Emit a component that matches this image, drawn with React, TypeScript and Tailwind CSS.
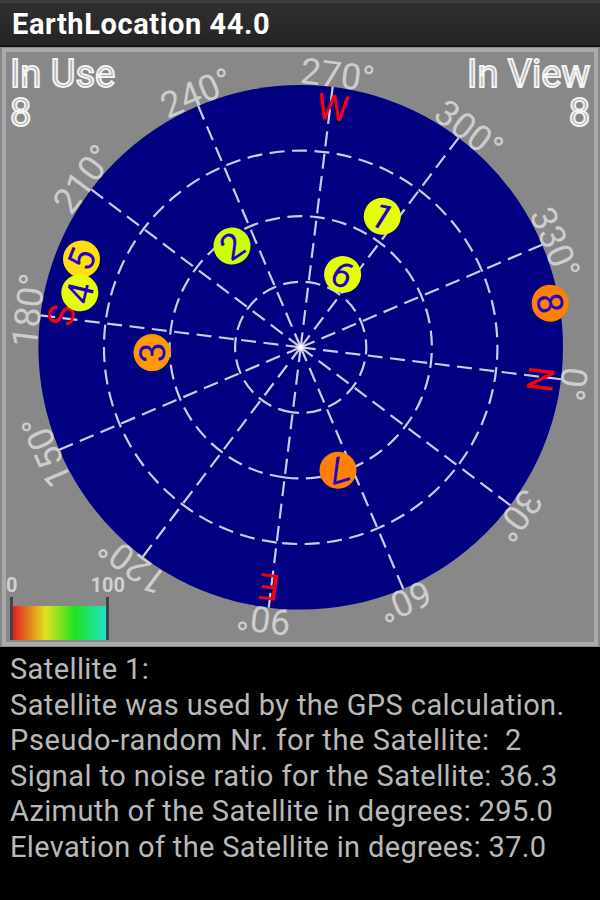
const CX = 300.7
const CY = 347.3
const R = 262.3
const HEADING = 7

const AZIMUTHS = [0, 30, 60, 90, 120, 150, 180, 210, 240, 270, 300, 330]

const COMPASS = [
  { label: 'N', azimuth: 0 },
  { label: 'E', azimuth: 90 },
  { label: 'S', azimuth: 180 },
  { label: 'W', azimuth: 270 },
]

const SATELLITES = [
  { id: 1, x: 382.3, y: 216.3, color: '#e6ff00' },
  { id: 2, x: 232, y: 246, color: '#ccff00' },
  { id: 3, x: 152, y: 352.6, color: '#ff9900' },
  { id: 5, x: 81.5, y: 259, color: '#ffe000' },
  { id: 4, x: 79.8, y: 292.8, color: '#e6ff00' },
  { id: 6, x: 342.6, y: 274.5, color: '#e6ff00' },
  { id: 7, x: 338, y: 470.2, color: '#ff8000' },
  { id: 8, x: 550.2, y: 303.2, color: '#ff8000' },
]

const DETAILS = [
  { text: 'Satellite 1:', tracking: 'tracking-[0.4px]' },
  { text: 'Satellite was used by the GPS calculation.', tracking: 'tracking-[0.42px]' },
  { text: 'Pseudo-random Nr. for the Satellite:  2', tracking: 'tracking-[0.59px]' },
  { text: 'Signal to noise ratio for the Satellite: 36.3', tracking: 'tracking-[0.43px]' },
  { text: 'Azimuth of the Satellite in degrees: 295.0', tracking: 'tracking-[0.36px]' },
  { text: 'Elevation of the Satellite in degrees: 37.0', tracking: 'tracking-[0.34px]' },
]

export default function App() {
  return (
    <div className="flex h-[900px] w-[600px] flex-col overflow-hidden bg-black font-['Roboto',sans-serif]">
      {/* title bar */}
      <header className="flex h-[47px] shrink-0 items-center border-t-[3px] border-b-2 border-t-[#3f3f3f] border-b-[#141414] bg-linear-to-b from-[#2f2f2f] to-[#242424] pl-3">
        <h1 className="text-[29px] leading-none font-bold tracking-[0.6px] text-white">EarthLocation 44.0</h1>
      </header>

      {/* sky view */}
      <section className="relative h-[600px] shrink-0 border-x-2 border-y border-[#888] bg-[#888]">
        <div className="h-full border-4 border-[#aaa]" />
        <SkyPlot />
        <Counter label="In Use" value={8} className="left-[8px] items-start" />
        <Counter label="In View" value={8} className="right-[8px] items-end" />
        <SnrLegend />
      </section>

      {/* satellite details */}
      <section className="flex-1 pt-[5px] pl-[10px] text-[29px] leading-[35.6px] text-[#b9b9b9]">
        {DETAILS.map(line => (
          <p key={line.text} className={`whitespace-pre ${line.tracking}`}>{line.text}</p>
        ))}
      </section>
    </div>
  )
}

/* ── Sub-components ── */

function SkyPlot() {
  return (
    <svg className="absolute -top-px -left-[2px]" width="600" height="600" viewBox="0 47 600 600">
      <circle cx={CX} cy={CY} r={R} fill="#000080" />

      <g fill="none" stroke="#fff" strokeOpacity="0.8" strokeWidth="2.2" strokeDasharray="15 7.5">
        {[1, 2, 3].map(i => (
          <circle key={i} cx={CX} cy={CY} r={(R * i) / 4} transform={`rotate(${HEADING + 90} ${CX} ${CY})`} />
        ))}
        {AZIMUTHS.map(a => (
          <path key={a} d={`M${CX} ${CY}h${R}`} transform={`rotate(${a + HEADING} ${CX} ${CY})`} />
        ))}
      </g>

      {AZIMUTHS.map(a => (
        <text
          key={a}
          x={CX + 3.5}
          y={CY - R}
          fontSize="36"
          fill="#cdcdcd"
          textAnchor="middle"
          transform={`rotate(${a + HEADING + 90} ${CX} ${CY})`}
        >
          {`${a}°`}
        </text>
      ))}

      {COMPASS.map(c => (
        <text
          key={c.label}
          x={CX + 2.5}
          y={CY - 229}
          fontSize="36"
          fill="#f80010"
          textAnchor="middle"
          transform={`rotate(${c.azimuth + HEADING + 90} ${CX} ${CY})`}
        >
          {c.label}
        </text>
      ))}

      {SATELLITES.map(s => {
        const turn = (Math.atan2(s.y - CY, s.x - CX) * 180) / Math.PI + 90
        return (
          <g key={s.id} transform={`translate(${s.x} ${s.y}) rotate(${turn})`}>
            <circle r="18.5" fill={s.color} />
            <text y="12.8" fontSize="36" fill="#2200c8" textAnchor="middle">{s.id}</text>
          </g>
        )
      })}
    </svg>
  )
}

function Counter({ label, value, className }: { label: string; value: number; className: string }) {
  return (
    <div
      className={`absolute top-[7px] flex flex-col text-[38px] leading-[39px] text-[#aaa] [-webkit-text-stroke:1.9px_#f4f4f4] ${className}`}
    >
      <span>{label}</span>
      <span>{value}</span>
    </div>
  )
}

function SnrLegend() {
  return (
    <div className="absolute bottom-[6px] left-[8px] w-[99px]">
      <div className="flex justify-between text-[20px] leading-[24px] font-bold text-[#d2d2d2]">
        <span className="-ml-[4px]">0</span>
        <span className="-mr-[16px]">100</span>
      </div>
      <div className="flex h-[43px] items-end border-x-[3px] border-[#444]">
        <div className="h-[34px] w-full bg-[linear-gradient(to_right,#e22020,#e2e220_35%,#20e220_67%,#20e2d0)]" />
      </div>
    </div>
  )
}
